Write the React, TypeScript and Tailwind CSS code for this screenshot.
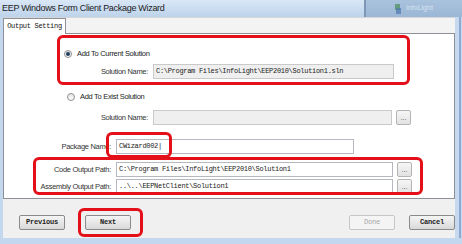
import type { ReactNode } from 'react'

const sans = "font-['Liberation_Sans',Arial,sans-serif]"
const mono = "font-['Liberation_Mono','Courier_New',monospace]"

function Radio({ checked }: { checked?: boolean }) {
  return (
    <span className="w-[8px] h-[8px] rounded-full border border-[#8e8f8f] bg-gradient-to-b from-[#e6e6e6] to-[#ffffff] flex items-center justify-center shrink-0">
      {checked && <span className="w-[4px] h-[4px] rounded-full bg-[#1f3d5e]" />}
    </span>
  )
}

function TextBox({
  width,
  value,
  disabled,
}: {
  width: number
  value?: string
  disabled?: boolean
}) {
  return (
    <div
      style={{ width }}
      className={`h-[15px] border flex items-center px-[2px] ${mono} text-[7px] leading-none tracking-[-0.3px] text-[#222] ${
        disabled ? 'bg-[#efefef] border-[#c9c9c9]' : 'bg-white border-[#b5b8bf]'
      }`}
    >
      {value}
    </div>
  )
}

function DotsButton() {
  return (
    <div className="ml-[4px] w-[15px] h-[15px] border border-[#b4b4b4] rounded-[2px] bg-gradient-to-b from-[#f6f6f6] to-[#e2e2e2] flex items-center justify-center text-[7px] leading-none text-[#888] pb-[1px]">
      ...
    </div>
  )
}

function Label({ width, children }: { width: number; children: ReactNode }) {
  return (
    <div
      style={{ width }}
      className={`text-right pr-[5px] ${sans} text-[7.5px] leading-none tracking-[-0.3px] text-[#333] shrink-0`}
    >
      {children}
    </div>
  )
}

function WinButton({ children, disabled }: { children: ReactNode; disabled?: boolean }) {
  return (
    <div
      className={`w-[46px] h-[15px] rounded-[2px] border flex items-center justify-center ${mono} font-bold text-[7px] tracking-[-0.2px] ${
        disabled
          ? 'border-[#c6c6c6] bg-[#f4f4f4] text-[#a8a8a8] font-normal'
          : 'border-[#8a8a8a] bg-gradient-to-b from-[#f5f5f5] to-[#d9d9d9] text-[#222]'
      }`}
    >
      {children}
    </div>
  )
}

function RedBox({ className }: { className: string }) {
  return (
    <div
      className={`absolute border-[3px] border-[#e3101a] rounded-[6px] pointer-events-none ${className}`}
    />
  )
}

export default function App() {
  return (
    <div className="relative w-[462px] h-[244px] overflow-hidden bg-[#c4d8ee] flex flex-col">
      {/* Title bar */}
      <div className="h-[17px] flex shrink-0">
        <div
          className={`flex-1 bg-gradient-to-b from-[#d9e7f6] to-[#bdd3eb] pl-[2px] flex items-center ${sans} text-[9px] tracking-[-0.3px] text-[#1b1b1b]`}
        >
          EEP Windows Form Client Package Wizard
        </div>
        <div className="w-[98px] bg-gradient-to-b from-[#a9c2dd] to-[#9bb7d6] border-l-2 border-[#7d97b5] flex items-center pl-[28px] gap-[4px]">
          <svg width="8" height="10" viewBox="0 0 8 10">
            <rect x="1" y="0" width="5" height="6" fill="#4a8f5a" opacity="0.7" />
            <rect x="2" y="4" width="5" height="6" fill="#4d78b0" opacity="0.7" />
          </svg>
          <span className={`${sans} text-[7px] text-[#d6e2ee]`}>InfoLight</span>
        </div>
      </div>

      {/* Body */}
      <div className="flex flex-1 min-h-0">
        <div className="w-[3px] bg-[#c3d7ee] shrink-0" />
        <div className="flex-1 flex flex-col bg-[#f0f0f0]">
          {/* Tab strip */}
          <div className="h-[16px] flex items-end border-t border-[#d6d6d6] bg-[#f3f3f3] shrink-0">
            <div
              className={`h-[16px] w-[63px] bg-white border border-b-0 border-[#8d9096] flex items-center justify-center ${mono} text-[7px] tracking-[-0.3px] text-[#111] -mb-px relative z-10`}
            >
              Output Setting
            </div>
          </div>
          {/* Panel */}
          <div className="h-[166px] bg-white border border-[#8d9096] flex flex-col shrink-0">
            <div className="mt-[15px] h-[10px] flex items-center ml-[60px] gap-[5px]">
              <Radio checked />
              <span className={`${sans} text-[7.5px] tracking-[-0.3px] text-[#222]`}>
                Add To Current Solution
              </span>
            </div>
            <div className="mt-[5px] flex items-center">
              <Label width={149}>Solution Name:</Label>
              <TextBox width={241} value="C:\Program Files\InfoLight\EEP2010\Solution1.sln" disabled />
            </div>
            <div className="mt-[13px] h-[10px] flex items-center ml-[63px] gap-[5px]">
              <Radio />
              <span className={`${sans} text-[7.5px] tracking-[-0.3px] text-[#222]`}>
                Add To Exist Solution
              </span>
            </div>
            <div className="mt-[8px] flex items-center">
              <Label width={149}>Solution Name:</Label>
              <TextBox width={239} disabled />
              <DotsButton />
            </div>
            <div className="mt-[14px] flex items-center">
              <Label width={112}>Package Name:</Label>
              <TextBox width={238} value="CWizard002|" />
            </div>
            <div className="mt-[8px] flex items-center">
              <Label width={112}>Code Output Path:</Label>
              <TextBox width={277} value="C:\Program Files\InfoLight\EEP2010\Solution1" />
              <DotsButton />
            </div>
            <div className="mt-[2px] flex items-center">
              <Label width={112}>Assembly Output Path:</Label>
              <TextBox width={277} value="..\..\EEPNetClient\Solution1" />
              <DotsButton />
            </div>
          </div>
          {/* Buttons */}
          <div className="flex-1 flex items-start pl-[16px] pt-[16px]">
            <WinButton>Previous</WinButton>
            <div className="ml-[20px]">
              <WinButton>Next</WinButton>
            </div>
            <div className="ml-auto flex gap-[14px]">
              <WinButton disabled>Done</WinButton>
              <WinButton>Cancel</WinButton>
            </div>
          </div>
        </div>
        <div className="w-[7px] shrink-0 bg-[#c6d9ef] flex justify-end pr-[1px]">
          <div className="w-[2px] bg-[#8eaad0]" />
        </div>
      </div>
      <div className="h-[6px] shrink-0 bg-[#c3d7ee]" />

      {/* Annotation boxes */}
      <RedBox className="left-[57px] top-[35px] w-[353px] h-[50px]" />
      <RedBox className="left-[106px] top-[132px] w-[66px] h-[26px]" />
      <RedBox className="left-[33px] top-[157px] w-[390px] h-[38px]" />
      <RedBox className="left-[78px] top-[208px] w-[65px] h-[29px]" />
    </div>
  )
}
